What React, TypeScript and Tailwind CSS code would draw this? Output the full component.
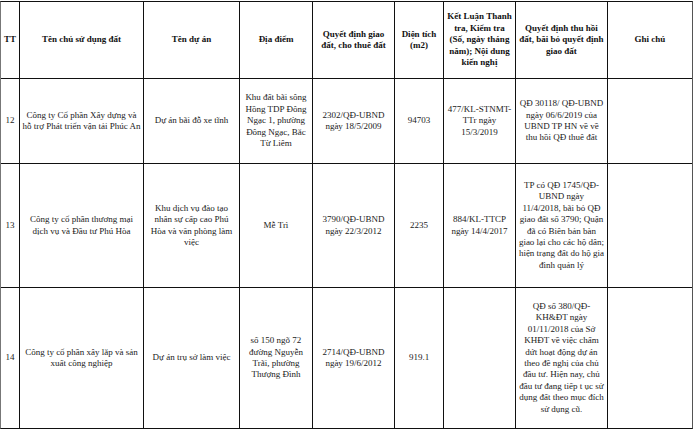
import React from "react";

type Cell = string[];

const header: Cell[] = [
  ["TT"],
  ["Tên chủ sử dụng đất"],
  ["Tên dự án"],
  ["Địa điểm"],
  ["Quyết định giao", "đất, cho thuê đất"],
  ["Diện tích", "(m2)"],
  ["Kết Luận Thanh", "tra, Kiểm tra", "(Số, ngày tháng", "năm); Nội dung", "kiến nghị"],
  ["Quyết định thu hồi", "đất, bãi bỏ quyết định", "giao đất"],
  ["Ghi chú"],
];

const rows: Cell[][] = [
  [
    ["12"],
    ["Công ty Cổ phần Xây dựng và", "hỗ trợ Phát triển vận tải Phúc An"],
    ["Dự án bãi đỗ xe tĩnh"],
    ["Khu đất bãi sông", "Hồng TDP Đông", "Ngạc 1, phường", "Đông Ngạc, Bắc", "Từ Liêm"],
    ["2302/QĐ-UBND", "ngày 18/5/2009"],
    ["94703"],
    ["477/KL-STNMT-", "TTr ngày", "15/3/2019"],
    ["QĐ 30118/ QĐ-UBND", "ngày 06/6/2019 của", "UBND TP HN về về", "thu hồi QĐ thuê đất"],
    [],
  ],
  [
    ["13"],
    ["Công ty cổ phần thương mại", "dịch vụ và Đầu tư Phú Hòa"],
    ["Khu dịch vụ đào tạo", "nhân sự cấp cao Phú", "Hòa và văn phòng làm", "việc"],
    ["Mễ Trì"],
    ["3790/QĐ-UBND", "ngày 22/3/2012"],
    ["2235"],
    ["884/KL-TTCP", "ngày 14/4/2017"],
    [
      "TP có QĐ 1745/QĐ-",
      "UBND ngày",
      "11/4/2018, bãi bỏ QĐ",
      "giao đất số 3790; Quận",
      "đã có Biên bản bàn",
      "giao lại cho các hộ dân;",
      "hiện trạng đất do hộ gia",
      "đình quản lý",
    ],
    [],
  ],
  [
    ["14"],
    ["Công ty cổ phần xây lắp và sản", "xuất công nghiệp"],
    ["Dự án trụ sở làm việc"],
    ["số 150 ngõ 72", "đường Nguyễn", "Trãi, phường", "Thượng Đình"],
    ["2714/QĐ-UBND", "ngày 19/6/2012"],
    ["919.1"],
    [],
    [
      "QĐ số 380/QĐ-",
      "KH&ĐT ngày",
      "01/11/2018 của Sở",
      "KHĐT về việc chấm",
      "dứt hoạt động dự án",
      "theo đề nghị của chủ",
      "đầu tư. Hiện nay, chủ",
      "đầu tư đang tiếp t ục sử",
      "dụng đất theo mục đích",
      "sử dụng cũ.",
    ],
    [],
  ],
];

function Lines({ lines }: { lines: string[] }) {
  return (
    <div>
      {lines.map((l, i) => (
        <div key={i} className="whitespace-nowrap">
          {l}
        </div>
      ))}
    </div>
  );
}

export default function App() {
  return (
    <div className="w-[700px] h-[430px] bg-white pt-px font-['Liberation_Serif',serif] text-[9px] leading-[11.4px] text-[#1a1a1a]">
      <div className="w-[693px] border border-[#111] border-l-[#777] border-r-[#555] bg-[#111] grid grid-cols-[18px_123px_95px_72px_81px_48px_71px_91px_84px] grid-rows-[76px_84px_123px_140px] gap-px">
        {header.map((c, i) => (
          <div key={"h" + i} className="bg-white flex items-center justify-center text-center font-bold text-[#111]">
            <Lines lines={c} />
          </div>
        ))}
        {rows.map((r, ri) =>
          r.map((c, ci) => (
            <div key={ri + "-" + ci} className="bg-white flex items-center justify-center text-center">
              <Lines lines={c} />
            </div>
          ))
        )}
      </div>
    </div>
  );
}
